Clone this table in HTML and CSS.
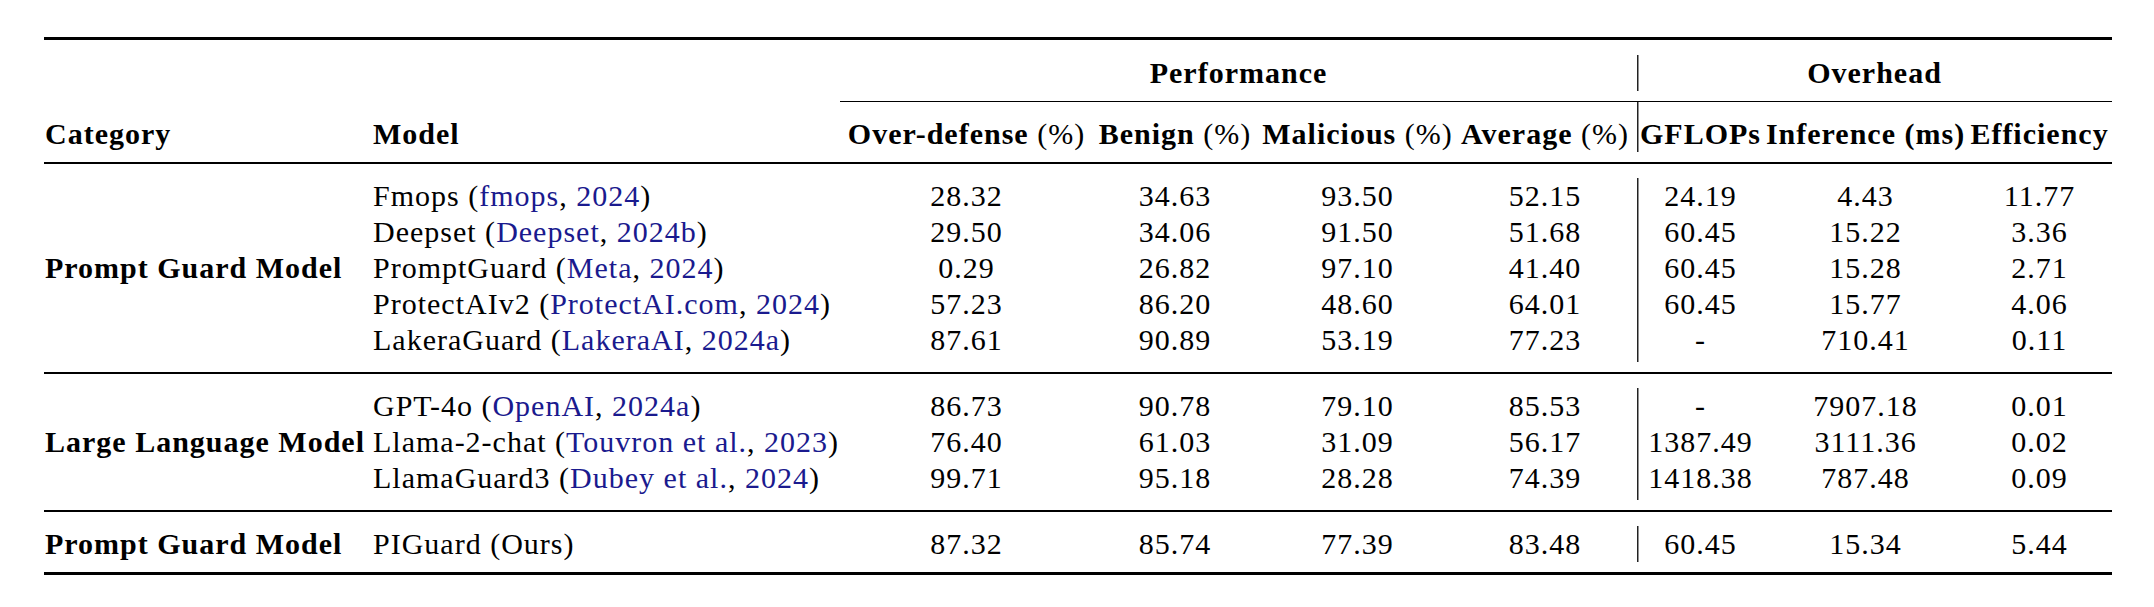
FILE: index.html
```html
<!DOCTYPE html>
<html lang="en">
<head>
<meta charset="utf-8">
<title>Prompt guard comparison</title>
<link rel="stylesheet" href="styles.css">
</head>
<body>
<table class="results">
  <colgroup>
    <col class="w-cat"><col class="w-model"><col class="w-over"><col class="w-benign"><col class="w-mal"><col class="w-avg"><col class="w-gflops"><col class="w-inf"><col class="w-eff">
  </colgroup>
  <thead>
    <tr class="h1">
      <th colspan="2" class="blank"></th>
      <th colspan="4" class="grp-title">Performance</th>
      <th colspan="3" class="grp-title sep">Overhead</th>
    </tr>
    <tr class="h2">
      <th class="cat">Category</th>
      <th class="model">Model</th>
      <th>Over-defense <span class="pct">(%)</span></th>
      <th>Benign <span class="pct">(%)</span></th>
      <th>Malicious <span class="pct">(%)</span></th>
      <th class="avg">Average <span class="pct">(%)</span></th>
      <th class="sep">GFLOPs</th>
      <th>Inference (ms)</th>
      <th>Efficiency</th>
    </tr>
  </thead>
  <tbody class="grp">
    <tr class="first">
      <td class="cat"></td>
      <td class="model">Fmops (<span class="cite">fmops</span>, <span class="cite">2024</span>)</td>
      <td>28.32</td><td>34.63</td><td>93.50</td><td class="avg">52.15</td>
      <td class="sep">24.19</td><td>4.43</td><td>11.77</td>
    </tr>
    <tr>
      <td class="cat"></td>
      <td class="model">Deepset (<span class="cite">Deepset</span>, <span class="cite">2024b</span>)</td>
      <td>29.50</td><td>34.06</td><td>91.50</td><td class="avg">51.68</td>
      <td class="sep">60.45</td><td>15.22</td><td>3.36</td>
    </tr>
    <tr>
      <td class="cat">Prompt Guard Model</td>
      <td class="model">PromptGuard (<span class="cite">Meta</span>, <span class="cite">2024</span>)</td>
      <td>0.29</td><td>26.82</td><td>97.10</td><td class="avg">41.40</td>
      <td class="sep">60.45</td><td>15.28</td><td>2.71</td>
    </tr>
    <tr>
      <td class="cat"></td>
      <td class="model">ProtectAIv2 (<span class="cite">ProtectAI.com</span>, <span class="cite">2024</span>)</td>
      <td>57.23</td><td>86.20</td><td>48.60</td><td class="avg">64.01</td>
      <td class="sep">60.45</td><td>15.77</td><td>4.06</td>
    </tr>
    <tr class="last">
      <td class="cat"></td>
      <td class="model">LakeraGuard (<span class="cite">LakeraAI</span>, <span class="cite">2024a</span>)</td>
      <td>87.61</td><td>90.89</td><td>53.19</td><td class="avg">77.23</td>
      <td class="sep">-</td><td>710.41</td><td>0.11</td>
    </tr>
  </tbody>
  <tbody class="grp">
    <tr class="first">
      <td class="cat"></td>
      <td class="model">GPT-4o (<span class="cite">OpenAI</span>, <span class="cite">2024a</span>)</td>
      <td>86.73</td><td>90.78</td><td>79.10</td><td class="avg">85.53</td>
      <td class="sep">-</td><td>7907.18</td><td>0.01</td>
    </tr>
    <tr>
      <td class="cat">Large Language Model</td>
      <td class="model">Llama-2-chat (<span class="cite">Touvron et al.</span>, <span class="cite">2023</span>)</td>
      <td>76.40</td><td>61.03</td><td>31.09</td><td class="avg">56.17</td>
      <td class="sep">1387.49</td><td>3111.36</td><td>0.02</td>
    </tr>
    <tr class="last">
      <td class="cat"></td>
      <td class="model">LlamaGuard3 (<span class="cite">Dubey et al.</span>, <span class="cite">2024</span>)</td>
      <td>99.71</td><td>95.18</td><td>28.28</td><td class="avg">74.39</td>
      <td class="sep">1418.38</td><td>787.48</td><td>0.09</td>
    </tr>
  </tbody>
  <tbody class="grp final">
    <tr class="first last">
      <td class="cat">Prompt Guard Model</td>
      <td class="model">PIGuard (Ours)</td>
      <td>87.32</td><td>85.74</td><td>77.39</td><td class="avg">83.48</td>
      <td class="sep">60.45</td><td>15.34</td><td>5.44</td>
    </tr>
  </tbody>
</table>
</body>
</html>
```

FILE: styles.css
```css
html, body {
  margin: 0;
  padding: 0;
  background: #ffffff;
}

body {
  padding: 37px 0 0 44px;
  font-family: "Liberation Serif", "Times New Roman", serif;
  font-size: 30px;
  letter-spacing: 1px;
  line-height: 36px;
  color: #000000;
}

.results {
  border-collapse: separate;
  border-spacing: 0;
  table-layout: fixed;
  width: 2068px;
}

.w-cat { width: 326px; }
.w-model { width: 470px; }
.w-over { width: 253px; }
.w-benign { width: 164px; }
.w-mal { width: 201px; }
.w-avg { width: 179px; }
.w-gflops { width: 127px; }
.w-inf { width: 203px; }
.w-eff { width: 145px; }

.results th,
.results td {
  padding: 0;
  text-align: center;
  white-space: nowrap;
  vertical-align: top;
}

.results th {
  font-weight: bold;
}

.results .cat {
  text-align: left;
  padding-left: 1px;
  font-weight: bold;
}

.results .model {
  text-align: left;
  padding-left: 3px;
  font-weight: normal;
}

.results th.model {
  font-weight: bold;
}

.results .avg {
  padding-right: 5px;
}

.pct {
  font-weight: normal;
}

.cite {
  color: #1a1a8e;
}

/* separator line between Performance and Overhead */
.results .sep {
  background-image: linear-gradient(#222222, #222222);
  background-repeat: no-repeat;
  background-size: 1.5px 100%;
  background-position: 0 0;
}

/* header row 1 */
.h1 th {
  border-top: 3px solid #000000;
  padding-top: 15px;
  padding-bottom: 10px;
}

.h1 .grp-title {
  border-bottom: 1px solid #000000;
}

.h1 .blank {
  border-bottom: 1px solid transparent;
}

.results .h1 .sep {
  background-position: 0 15px;
  background-size: 1.5px calc(100% - 25px);
}

/* header row 2 */
.h2 th {
  padding-top: 14px;
  padding-bottom: 10px;
}

.results .h2 .sep {
  background-size: 1.5px calc(100% - 10px);
}

/* data groups */
.grp tr.first td {
  border-top: 2px solid #000000;
  padding-top: 14px;
}

.grp tr.last td {
  padding-bottom: 14px;
}

.results .grp tr.first .sep {
  background-position: 0 14px;
  background-size: 1.5px calc(100% - 14px);
}

.results .grp tr.last .sep {
  background-size: 1.5px calc(100% - 10px);
}

.grp.final tr.last td {
  padding-bottom: 10px;
  border-bottom: 3px solid #000000;
}

.results .grp tr.first.last .sep {
  background-position: 0 14px;
  background-size: 1.5px calc(100% - 24px);
}
```
